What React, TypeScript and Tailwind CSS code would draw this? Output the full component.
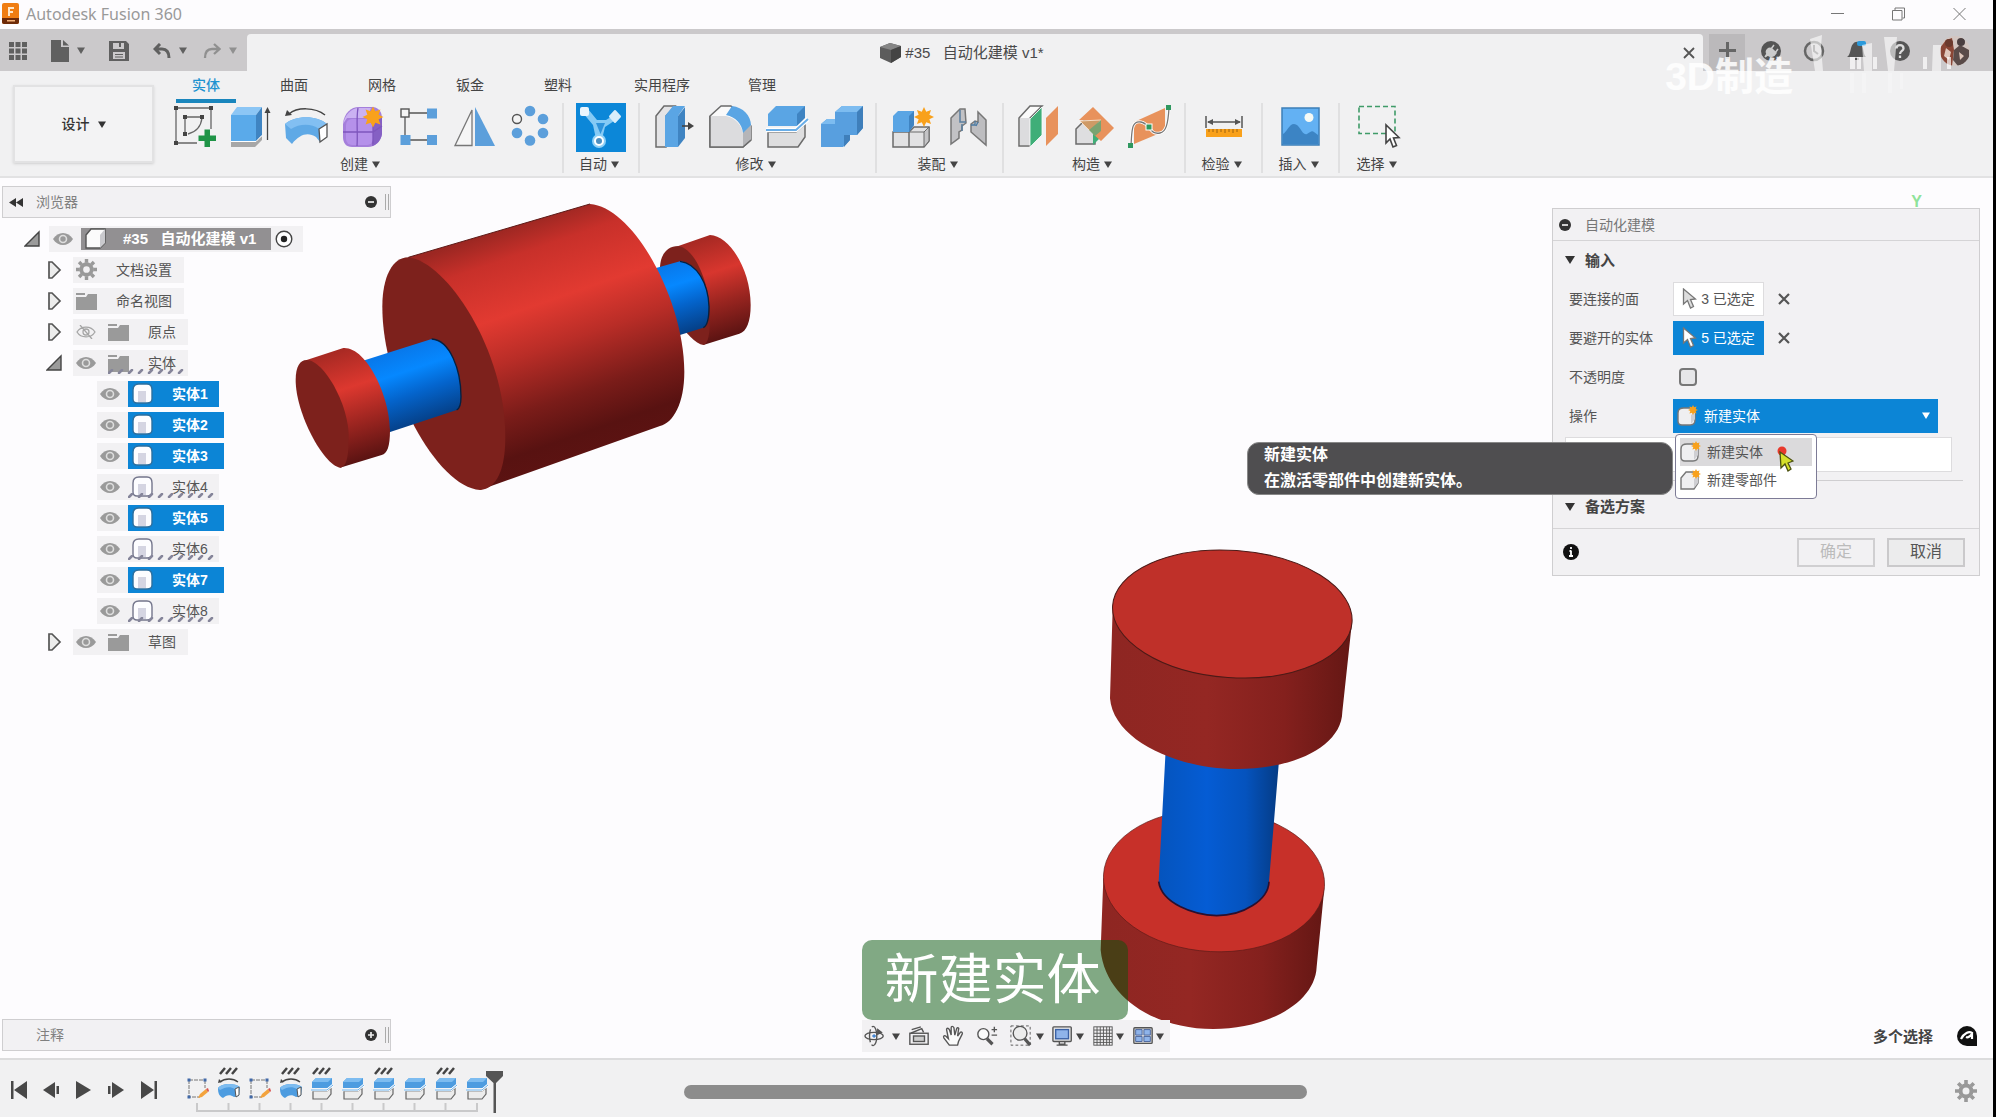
import React from "react";

const BLUE = "#5aa5e4";
const EDGE = "#6b6b6b";

type Kids = { children?: React.ReactNode };

function Pic({ children, size = 46 }: Kids & { size?: number }) {
  return (
    <svg width={size} height={size} viewBox="0 0 46 46" fill="none" aria-hidden="true" className="shrink-0">
      {children}
    </svg>
  );
}

function Caret({ className = "" }: { className?: string }) {
  return (
    <svg width="8" height="7" viewBox="0 0 8 7" aria-hidden="true" className={"shrink-0 " + className}>
      <path d="M0 0.5H8L4 7Z" fill="currentColor" />
    </svg>
  );
}

function Star({ cx, cy, r }: { cx: number; cy: number; r: number }) {
  const pts = Array.from({ length: 16 }, (_, i) => {
    const a = (i * Math.PI) / 8;
    const d = i % 2 ? r * 0.58 : r;
    return `${cx + d * Math.sin(a)},${cy - d * Math.cos(a)}`;
  }).join(" ");
  return <polygon points={pts} fill="#f9a11b" />;
}

/* ---------- ribbon icons ---------- */

const SketchIcon = () => (
  <Pic>
    <path d="M5 4H40M5 4V39H26M40 4V25" stroke="#666" strokeWidth="1.3" />
    <path d="M14 13H31M14 13V29M31 14C30 22 25 28 17 30" stroke="#666" strokeWidth="1.3" />
    <g fill="#444">
      <rect x="3" y="2" width="4" height="4" /><rect x="38" y="2" width="4" height="4" /><rect x="3" y="37" width="4" height="4" />
      <rect x="12" y="11" width="4" height="4" /><rect x="29" y="11" width="4" height="4" /><rect x="12" y="28" width="4" height="4" />
    </g>
    <path d="M33.500 25.500h5.500v6h6v5.500h-6v6h-5.500v-6h-6v-5.500h6z" fill="#1f9447" />
  </Pic>
);

const ExtrudeIcon = () => (
  <Pic>
    <path d="M4 37H28L35 32V36L28 43H4Z" fill="#a7a7a7" />
    <path d="M4 11L10 3H35L29 11Z" fill="#8cc6f5" />
    <path d="M4 11H29V37H4Z" fill="#5aaaea" />
    <path d="M29 11L35 3V31L29 37Z" fill="#3f84c2" />
    <path d="M4 37.500H29L35 31.500" stroke="#fff" />
    <path d="M40.500 36V7" stroke="#444" strokeWidth="1.300" />
    <path d="M37.500 9L40.500 3L43.500 9Z" fill="#444" />
  </Pic>
);

const RevolveIcon = () => (
  <Pic>
    <path d="M6 10C14 3 32 3 42 11" stroke="#444" strokeWidth="1.500" />
    <path d="M2 12L4 6L9 11Z" fill="#444" />
    <path d="M2 20C12 11 34 11 44 20V33L37 38L33 33C25 28 17 30 9 40L3 34Z" fill="#5fa9e6" />
    <path d="M2 20C12 11 34 11 44 20L36 25C28 19 16 20 8 25Z" fill="#82bff2" />
    <path d="M36 25L44 20V33L37 38Z" fill="#fff" stroke="#555" strokeWidth="1.300" />
  </Pic>
);

const FormIcon = () => (
  <Pic>
    <path d="M4 20C5 9 12 3 20 3H34C41 4 43 9 43 15V30C42 37 36 43 29 43H13C7 43 4 39 4 33Z" fill="#a57fdb" />
    <path d="M4 20C6 11 12 4 20 4H32L28 14H8Z" fill="#cbb2f2" />
    <path d="M34 18L43 12V30C42 36 38 41 33 42Z" fill="#8560c4" />
    <rect x="7" y="15" width="27" height="26" rx="6" fill="#b591ea" />
    <path d="M19 4C17 14 19 30 18 42M4 28H34L43 22M34 16V40" stroke="#7e56bd" strokeWidth="1.300" />
    <Star cx={34} cy={13} r={10.500} />
  </Pic>
);

const RectPatternIcon = () => (
  <Pic>
    <path d="M10 9H37M10 9V36H37" stroke="#555" strokeWidth="1.300" />
    <rect x="6" y="5" width="8" height="8" fill="#f4f4f4" stroke="#555" strokeWidth="1.400" />
    <rect x="32" y="4.500" width="10" height="10" fill="#5c9fdb" /><rect x="5.500" y="31" width="10" height="10" fill="#5c9fdb" />
    <rect x="32" y="31" width="10" height="10" fill="#5c9fdb" />
  </Pic>
);

const MirrorIcon = () => (
  <Pic>
    <path d="M4 41.500L21 6V41.500Z" fill="#f6f6f6" stroke="#777" strokeWidth="1.300" />
    <path d="M24 3L44 42H24Z" fill="#5c9fdb" />
  </Pic>
);

const CircPatternIcon = () => (
  <Pic>
    <circle cx="10" cy="15" r="4.500" stroke="#555" strokeWidth="1.400" fill="#f4f4f4" />
    <g fill="#5c9fdb">
      <circle cx="23" cy="7" r="5.300" /><circle cx="36" cy="15" r="5.300" /><circle cx="36" cy="29" r="5.300" />
      <circle cx="23" cy="36.500" r="5.300" /><circle cx="10" cy="29" r="5.300" />
    </g>
  </Pic>
);

const AutoIcon = () => (
  <svg width="50" height="49" viewBox="0 0 50 49" fill="none" aria-hidden="true">
    <rect width="50" height="49" fill="#0c87d8" />
    <path d="M7 10L17 22L20 36H26L29 24L41 16L38 12L30 17H21L12 6Z" fill="#86caf5" />
    <path d="M20 20H29L24.500 31Z" fill="#2f93db" />
    <rect x="4" y="4" width="9" height="9" rx="2" fill="#eaf5fd" />
    <path d="M39 8L44 13.500L39 19L34 13.500Z" fill="#d8edfb" stroke="#d8edfb" strokeWidth="2" strokeLinejoin="round" />
    <circle cx="23" cy="38" r="7" fill="#8ed0f7" /><circle cx="23" cy="38" r="4" stroke="#fff" strokeWidth="2" fill="#4d8fc0" />
  </svg>
);

const PressPullIcon = () => (
  <Pic>
    <path d="M5 12L13 2H24L15 12V43H5Z" fill="#e4e4e6" stroke={EDGE} strokeWidth="1.500" />
    <path d="M14 12L22 2H34L27 12V43H14Z" fill={BLUE} />
    <path d="M27 12L34 3V34L27 43Z" fill="#3f84c2" />
    <path d="M31 22H38" stroke="#444" strokeWidth="1.600" /><path d="M37 18L43 22L37 26Z" fill="#444" />
  </Pic>
);

const FilletIcon = () => (
  <Pic>
    <path d="M3 12L14 2H24L44 22V36L36 43H3Z" fill="#fafafa" stroke={EDGE} strokeWidth="1.500" strokeLinejoin="round" />
    <path d="M3 12H19C29 14 35 22 36 30V43H3Z" fill="#dcdcde" />
    <path d="M36 28L44 20V36L36 43Z" fill="#b5b5b8" />
    <path d="M19 11L25 2C36 3 44 12 44 21L36 29C35 20 29 13 19 11Z" fill={BLUE} />
    <path d="M3 12V43H36L44 36" stroke={EDGE} strokeWidth="1.500" />
  </Pic>
);

const SplitIcon = () => (
  <Pic>
    <path d="M5 28H33L42 20V33L35 43H5Z" fill="#dededf" stroke={EDGE} strokeWidth="1.500" />
    <path d="M5 10L13 2H42V13L34 22H5Z" fill={BLUE} />
    <path d="M34 10L42 2V14L34 22Z" fill="#3f84c2" />
    <path d="M3 26H33L45 15" stroke="#fff" strokeWidth="4.500" /><path d="M3 26H33L45 15" stroke="#69aee8" strokeWidth="2" />
  </Pic>
);

const CombineIcon = () => (
  <Pic>
    <path d="M2 20L8 15H16V8L23 2H44V24L38 31H31V36L24 43H2Z" fill="#589fdf" />
    <path d="M16 8L23 2H44L38 8ZM2 20L8 15H16V20Z" fill="#7dbcf0" />
    <path d="M38 8L44 2V24L38 31ZM25 31H31V36L25 43Z" fill="#3f7fbb" />
  </Pic>
);

const NewComponentIcon = () => (
  <Pic>
    <path d="M4 28H20V43H4ZM20 28L25 23H40V37L35 43H20Z" fill="#e2e2e3" stroke={EDGE} strokeWidth="1.500" />
    <path d="M35 28L40 23V37L35 43ZM20 28H35" stroke={EDGE} fill="#c4c4c6" />
    <path d="M4 12L9 7H25V21L20 28H4Z" fill={BLUE} /><path d="M20 12L25 7V21L20 28Z" fill="#3f84c2" />
    <Star cx={35} cy={13} r={10} />
  </Pic>
);

const JointIcon = () => (
  <Pic>
    <path d="M6 14L15 5H20L21 19L17 22V26L14 28V34L6 40Z" fill="#c2c2c5" stroke="#777" strokeWidth="1.500" />
    <path d="M15 6V18H21M17 20V27" stroke="#5b7f9e" strokeWidth="1.500" />
    <path d="M41 16L33 8V18L30 17L26 20V28L41 41Z" fill="#bdbdc0" stroke="#777" strokeWidth="1.500" />
    <path d="M30 17V21H26M33 18L31 22" stroke="#4b7ba3" strokeWidth="1.300" />
  </Pic>
);

const OffsetPlaneIcon = () => (
  <Pic>
    <path d="M4 14L15 2H27L15 14V42H4Z" fill="#fafafa" stroke={EDGE} strokeWidth="1.500" />
    <path d="M5 14H15V41H5Z" fill="#dcdcde" />
    <path d="M15 15L27 3V31L15 43Z" fill="#3fae78" stroke="#fff" strokeWidth="0.800" />
    <path d="M31 14L43 2V30L31 42Z" fill="#e8925c" />
  </Pic>
);

const AnglePlaneIcon = () => (
  <Pic>
    <path d="M5 25L13 17H30L24 25V40H5Z" fill="#dedee0" stroke={EDGE} strokeWidth="1.500" />
    <path d="M22 24L31 16V32L22 41Z" fill="#3fae78" />
    <path d="M8 16L22 3L43 24L30 37L22 30L28 17Z" fill="#e8925c" />
    <path d="M9 17L30 16L19 27Z" fill="#cf9a66" stroke="#f6dcc4" strokeWidth="1" />
    <path d="M18 26L30 16V27L24 32Z" fill="#7aa371" />
  </Pic>
);

const PathPlaneIcon = () => (
  <Pic>
    <path d="M7 18L38 4V27L7 40Z" fill="#e8925c" />
    <path d="M4 41C5 28 4 16 14 18C24 20 22 31 33 29C39 28 41 20 42 4" stroke="#fff" strokeWidth="3" />
    <path d="M4 41C5 28 4 16 14 18C24 20 22 31 33 29C39 28 41 20 42 4" stroke="#777" strokeWidth="1.300" />
    <g fill="#2f9860"><rect x="1" y="39" width="5" height="5" /><rect x="39" y="1" width="5" height="5" /></g>
    <rect x="19" y="20" width="6" height="6" fill="#2f9860" stroke="#fff" />
  </Pic>
);

const MeasureIcon = () => (
  <Pic>
    <path d="M5 12V24M41 12V24M7 18H39" stroke="#555" strokeWidth="1.500" />
    <path d="M6 18L12 15V21ZM40 18L34 15V21Z" fill="#555" />
    <rect x="5" y="25" width="36" height="8" fill="#f9a11b" />
    <path d="M8 25V28M12 25V28M16 25V29M20 25V28M24 25V29M28 25V28M32 25V29M36 25V28" stroke="#9c6210" />
  </Pic>
);

const InsertIcon = () => (
  <Pic>
    <rect x="4" y="4" width="37" height="37" fill="#63b1f3" stroke="#3d7fb8" strokeWidth="1.500" />
    <circle cx="31" cy="13.500" r="4.500" fill="#f5faf6" />
    <path d="M5 30C9 28 11 20 16 20C22 20 24 32 29 30C32 28 34 26 36 28L40 31V40H5Z" fill="#3c84c4" />
  </Pic>
);

const SelectIcon = () => (
  <Pic>
    <rect x="3" y="2.500" width="36" height="27" stroke="#3f9b68" strokeWidth="1.600" strokeDasharray="5 3" />
    <path d="M30 21V39L34 35L37 43L40.500 41.500L37.500 34L43 33.500Z" fill="#fff" stroke="#444" strokeWidth="1.600" />
  </Pic>
);

type Group = { label: string; width: string; icons: { name: string; el: React.ReactNode }[] };

const groups: Group[] = [
  {
    label: "创建", width: "w-[402px]",
    icons: [
      { name: "创建草图", el: <SketchIcon /> }, { name: "拉伸", el: <ExtrudeIcon /> }, { name: "旋转", el: <RevolveIcon /> },
      { name: "创建形状", el: <FormIcon /> }, { name: "矩形阵列", el: <RectPatternIcon /> }, { name: "镜像", el: <MirrorIcon /> },
      { name: "环形阵列", el: <CircPatternIcon /> },
    ],
  },
  { label: "自动", width: "w-[76px]", icons: [{ name: "自动化建模", el: <AutoIcon /> }] },
  {
    label: "修改", width: "w-[237px]",
    icons: [
      { name: "按拉", el: <PressPullIcon /> }, { name: "圆角", el: <FilletIcon /> }, { name: "分割实体", el: <SplitIcon /> },
      { name: "合并", el: <CombineIcon /> },
    ],
  },
  { label: "装配", width: "w-[127px]", icons: [{ name: "新建零部件", el: <NewComponentIcon /> }, { name: "联接", el: <JointIcon /> }] },
  {
    label: "构造", width: "w-[182px]",
    icons: [{ name: "偏移平面", el: <OffsetPlaneIcon /> }, { name: "角度平面", el: <AnglePlaneIcon /> }, { name: "沿路径平面", el: <PathPlaneIcon /> }],
  },
  { label: "检验", width: "w-[77px]", icons: [{ name: "测量", el: <MeasureIcon /> }] },
  { label: "插入", width: "w-[77px]", icons: [{ name: "插入图像", el: <InsertIcon /> }] },
  { label: "选择", width: "w-[77px]", icons: [{ name: "窗口选择", el: <SelectIcon /> }] },
];

/* ---------- title bar and quick access bar ---------- */

function TitleBar() {
  return (
    <header className="flex h-[29px] shrink-0 items-center bg-[#fdfcfe] pb-0.5 pl-0.5">
      <svg width="18" height="22" viewBox="0 0 18 22" aria-hidden="true">
        <rect x="0" y="0" width="17" height="21" rx="2" fill="#f07d12" /><path d="M0 15H17V19a2 2 0 0 1-2 2H2a2 2 0 0 1-2-2Z" fill="#6d2a07" />
        <path d="M6 4H12V6H8V8H11V10H8V13H6Z" fill="#ffe7c9" /><rect x="5" y="17" width="8" height="1.500" fill="#f3b27a" />
      </svg>
      <h1 className="ml-1.5 flex-1 font-['Noto_Sans'] text-base leading-none text-[#999]">Autodesk Fusion 360</h1>
      <div className="flex items-center gap-12 pr-[27px] text-[#777]">
        <button aria-label="最小化"><svg width="13" height="14" viewBox="0 0 13 14" fill="none" stroke="currentColor"><path d="M0 6.500H13" /></svg></button>
        <button aria-label="还原"><svg width="13" height="14" viewBox="0 0 13 14" fill="none" stroke="currentColor"><path d="M0.500 3.500H10V13H0.500ZM3 3V1H12.500V11H10.500" /></svg></button>
        <button aria-label="关闭"><svg width="13" height="14" viewBox="0 0 13 14" fill="none" stroke="currentColor"><path d="M0.500 1L12.500 13M12.500 1L0.500 13" /></svg></button>
      </div>
    </header>
  );
}

function QuickBar() {
  return (
    <div className="relative flex h-[42px] shrink-0 bg-[#cbc9cb] pt-[5px]">
      <div className="flex w-[247px] shrink-0 items-center pb-2 pl-2 pt-1 text-[#606060]">
        <button aria-label="数据面板">
          <svg width="20" height="20" viewBox="0 0 20 20" fill="currentColor"><path d="M1 1h5v5H1zM7.500 1h5v5h-5zM14 1h5v5h-5zM1 7.500h5v5H1zM7.500 7.500h5v5h-5zM14 7.500h5v5h-5zM1 14h5v5H1zM7.500 14h5v5h-5zM14 14h5v5h-5z" /></svg>
        </button>
        <button aria-label="文件" className="ml-[23px] flex items-center gap-2">
          <svg width="18" height="22" viewBox="0 0 18 22" fill="currentColor"><path d="M0 0H10V7H18V22H0ZM12 0L18 5.500H12Z" /></svg>
          <Caret />
        </button>
        <button aria-label="保存" className="ml-6">
          <svg width="20" height="20" viewBox="0 0 20 20" fill="currentColor"><path fillRule="evenodd" d="M0 0H17L20 3V20H0ZM4 2V8H15V2H12V6H10V2ZM4 11V18H16V11ZM6 13H14V14H6ZM6 15.500H14V16.500H6Z" /></svg>
        </button>
        <button aria-label="撤消" className="ml-6 flex items-center gap-2">
          <svg width="18" height="16" viewBox="0 0 18 16" fill="none" stroke="currentColor" strokeWidth="3"><path d="M7 1L2 6L7 11M2 6H9C14 6 16 10 16 15" /></svg>
          <Caret />
        </button>
        <button aria-label="重做" className="ml-4 flex items-center gap-2 text-[#909090]">
          <svg width="18" height="16" viewBox="0 0 18 16" fill="none" stroke="currentColor" strokeWidth="2.300"><path d="M11 1L16.500 6L11 11M16 6H9C4 6 2 10 2 15" /></svg>
          <Caret />
        </button>
      </div>
      <div className="flex min-w-0 flex-1 items-center rounded-t bg-[#f1f1f2] pr-2">
        <div className="flex flex-1 items-center justify-center gap-1 pr-1.5 text-[15px] leading-none text-[#4a4a4a]">
          <svg width="21" height="20" viewBox="0 0 21 20" aria-hidden="true"><path d="M0 4L10 0L21 3V14L11 20L0 15Z" fill="#5c5c5c" /><path d="M0 4L10 0L21 3L11 7Z" fill="#858585" /><path d="M11 7L21 3V14L11 20Z" fill="#444" /></svg>
          <span className="whitespace-pre">#35   自动化建模 v1*</span>
        </div>
        <button aria-label="关闭文档">
          <svg width="12" height="12" viewBox="0 0 12 12" fill="none" stroke="#555" strokeWidth="1.800"><path d="M1 1L11 11M11 1L1 11" /></svg>
        </button>
      </div>
      <div className="flex w-[290px] shrink-0 items-center pl-1.5 text-[#555]">
        <button aria-label="新建文档" className="flex h-full w-9 items-center justify-center bg-[#bbb9bb] pb-1">
          <svg width="17" height="17" viewBox="0 0 17 17" stroke="#666" strokeWidth="3"><path d="M8.500 0V17M0 8.500H17" /></svg>
        </button>
        <div className="flex h-full flex-1 items-center gap-[21px] pb-1 pl-[15px]">
          <button aria-label="扩展"><svg width="22" height="22" viewBox="0 0 22 22"><circle cx="11" cy="11" r="10" fill="#555" /><path d="M5 17L7 14C5 10 9 7 12 9L16 13C14 17 10 17 8 15ZM11 9L14 5M15 13L18 9" stroke="#ccc" strokeWidth="1.500" fill="#ccc" /></svg></button>
          <button aria-label="作业状态"><svg width="22" height="22" viewBox="0 0 22 22" fill="none"><circle cx="11" cy="11" r="9" stroke="#666" strokeWidth="2.500" /><path d="M11 5V11L15 14" stroke="#666" strokeWidth="2" /></svg></button>
          <button aria-label="通知"><svg width="22" height="22" viewBox="0 0 22 22"><path d="M1 17C5 15 4 7 7 4C9 1 13 1 15 4C18 7 17 15 20 17ZM9 18H13V20H9Z" fill="#555" /><rect x="11" y="1" width="9" height="5" rx="2" fill="#2b9adb" /></svg></button>
          <button aria-label="帮助"><svg width="22" height="22" viewBox="0 0 22 22" fill="none"><circle cx="11" cy="11" r="10" fill="#555" /><path d="M7.500 8.500C7.500 4 14.500 4 14.500 8.500C14.500 11 11 11 11 14M11 15.500V18" stroke="#ddd" strokeWidth="2.300" /></svg></button>
          <button aria-label="账户" className="ml-2">
            <svg width="30" height="30" viewBox="0 0 30 30">
              <clipPath id="avatarClip"><circle cx="15" cy="15" r="15" /></clipPath>
              <g clipPath="url(#avatarClip)">
                <rect width="30" height="30" fill="#d3c6c1" /><path d="M0 12L6 4L12 2L14 14L12 30H0Z" fill="#8a4636" /><circle cx="9" cy="7" r="4" fill="#6b3a2e" />
                <path d="M14 14L20 9L29 14V26L18 30L13 24Z" fill="#5a4b49" /><circle cx="21" cy="6" r="4" fill="#4b3f40" /><path d="M6 12L11 16L9 24L4 20ZM19 16L24 20L20 24Z" fill="#dfc6bb" />
              </g>
            </svg>
          </button>
        </div>
      </div>
      <div className="pointer-events-none absolute right-9 top-1 z-10 flex items-start">
        <span className="mr-[9px] mt-6 text-[39px] font-bold leading-none text-white/85">3D制造</span>
        <svg width="155" height="60" viewBox="0 0 155 60" fill="#fff" fillOpacity="0.600" aria-hidden="true">
          <path d="M8 6L20 2L19 14L21 38H13ZM60 12L70 10V38H62ZM82 4H95L92 38H86ZM131 12H139V38H130Z" />
          <path d="M48 24H53V36H48ZM55 24H59V36H55ZM71 24H75V36H71ZM121 24H125V36H121ZM145 24H149V36H145Z" fillOpacity="0.700" />
          <path d="M48 40H52V60H48ZM60 40H64V60H60ZM86 40H90V60H86ZM98 40H101V56H98Z" fillOpacity="0.250" />
        </svg>
      </div>
    </div>
  );
}

/* ---------- ribbon ---------- */

const tabs = [
  { label: "实体", width: "w-[88px]", on: true }, { label: "曲面", width: "w-[88px]" }, { label: "网格", width: "w-[88px]" },
  { label: "钣金", width: "w-[88px]" }, { label: "塑料", width: "w-[88px]" }, { label: "实用程序", width: "w-[120px]" }, { label: "管理", width: "w-20" },
];

function Ribbon() {
  return (
    <div className="flex h-[107px] shrink-0 border-b-2 border-[#e2e2e3] bg-[#f1f1f2] text-sm leading-none text-[#444]">
      <div className="w-[164px] shrink-0 pl-[13px] pt-3.5">
        <button className="flex h-[78px] w-[141px] items-center justify-center gap-2 border-2 border-[#e2e2e3] bg-[#f3f3f4] font-medium text-[#333] shadow-sm">
          设计 <Caret />
        </button>
      </div>
      <div className="-ml-0.5 flex min-w-0 flex-1 flex-col">
        <div role="tablist" className="flex h-8 shrink-0">
          {tabs.map((t) => (
            <button key={t.label} role="tab" aria-selected={!!t.on} className={"relative flex h-7 items-center justify-center " + t.width + (t.on ? " font-medium text-[#1f93d0]" : "")}>
              {t.label}
              {t.on && <span className="absolute -bottom-1 left-3.5 h-1 w-[60px] bg-[#1a86bd]" />}
            </button>
          ))}
        </div>
        <div className="flex">
          {groups.map((g) => (
            <section key={g.label} className={"flex h-[70px] shrink-0 flex-col border-r-2 border-[#e0e0e1] last:border-0 " + g.width}>
              <div className="flex h-12 items-center justify-center">
                {g.icons.map((i) => (
                  <button key={i.name} aria-label={i.name} className="flex w-14 justify-center">{i.el}</button>
                ))}
              </div>
              <button className="flex flex-1 items-center justify-center gap-1 pr-1 pt-1">{g.label}<Caret /></button>
            </section>
          ))}
        </div>
      </div>
    </div>
  );
}

/* ---------- browser tree ---------- */

function Eye({ off }: { off?: boolean }) {
  return (
    <svg width="20" height="14" viewBox="0 0 20 14" fill="none" aria-hidden="true" className="shrink-0">
      {off ? (
        <path d="M1 7C5 0.500 15 0.500 19 7C15 13.500 5 13.500 1 7ZM4 0L16 14M7 7C7 3 13 3 13 7C13 11 7 11 7 7" stroke="#a5a5a5" strokeWidth="1.300" />
      ) : (
        <>
          <path d="M0 7C5 -1 15 -1 20 7C15 15 5 15 0 7Z" fill="#9a9a9a" /><circle cx="10" cy="7" r="3.500" stroke="#dedede" strokeWidth="1.600" />
        </>
      )}
    </svg>
  );
}

const Folder = () => (
  <svg width="21" height="18" viewBox="0 0 21 18" fill="#9a9a9a" aria-hidden="true" className="shrink-0"><path d="M0 5H10L12 2H21V18H0ZM0 1H9V3H0Z" /></svg>
);

const Gear = ({ size = 21 }: { size?: number }) => (
  <svg width={size} height={size} viewBox="0 0 22 22" fill="none" aria-hidden="true" className="shrink-0">
    <circle cx="11" cy="11" r="5.500" stroke="#999" strokeWidth="4" />
    <path d="M11 0V4M11 18V22M0 11H4M18 11H22M3.200 3.200L6 6M16 16L18.800 18.800M3.200 18.800L6 16M16 6L18.800 3.200" stroke="#999" strokeWidth="3.600" />
  </svg>
);

function BodyIcon({ on }: { on?: boolean }) {
  return (
    <svg width="21" height="21" viewBox="0 0 21 21" aria-hidden="true" className="shrink-0">
      <path d="M1 7C1 2 4 1 7 1H15C19 1 20 4 20 7V16C20 19 18 20 15 20H5C2 20 1 19 1 16Z" fill="#fdfdff" stroke={on ? "#2c6f9f" : "#74768c"} strokeWidth="1.400" />
      <path d="M6 8H14V19H6Z" fill="#d5d5e2" />
    </svg>
  );
}

function Twisty({ open }: { open?: boolean }) {
  return (
    <svg width="16" height="18" viewBox="0 0 16 18" aria-hidden="true">
      {open ? <path d="M1 16L15 2V16Z" fill="#9b9b9b" stroke="#444" strokeWidth="1.400" /> : <path d="M3 1H6L14 9L6 17H3Z" fill="#ececec" stroke="#555" strokeWidth="1.700" />}
    </svg>
  );
}

function Hatch({ n }: { n: number }) {
  return (
    <span className="absolute inset-x-0 bottom-0.5 overflow-hidden">
      <svg width={n * 10} height="5" viewBox={`0 0 ${n * 10} 5`} stroke="#85859a" strokeWidth="2.500" strokeLinecap="round" aria-hidden="true">
        {Array.from({ length: n }, (_, i) => <path key={i} d={`M${i * 10 + 1} 4L${i * 10 + 4} 1`} />)}
      </svg>
    </span>
  );
}

function FolderRow({ label, open, eye, icon, hatch }: { label: string; open?: boolean; eye?: "on" | "off"; icon?: React.ReactNode; hatch?: boolean }) {
  return (
    <li className="flex h-[31px] items-center pl-[46px]">
      <button aria-label={"展开 " + label} className="w-[27px]"><Twisty open={open} /></button>
      <span className="flex h-[26px] items-center bg-[#f2f1f3] pl-[3px]">
        {eye && <button aria-label={"可见性 " + label} className="mr-3"><Eye off={eye === "off"} /></button>}
        <span className="relative flex h-full items-center pr-3">
          {icon ?? <Folder />}
          <span className="ml-[19px]">{label}</span>
          {hatch && <Hatch n={8} />}
        </span>
      </span>
    </li>
  );
}

function BodyRow({ n, on }: { n: number; on: boolean }) {
  return (
    <li className="flex h-[31px] items-center pl-[97px]">
      <button aria-label={"可见性 实体" + n} className="flex h-[26px] w-[31px] items-center bg-[#f2f1f3] pl-[3px]"><Eye /></button>
      <button className={"relative flex h-[26px] items-center pl-1 " + (on ? "bg-[#0c85d6] font-bold text-white " : "bg-[#f2f1f3] ") + (on && n > 1 ? "w-24" : "w-[91px]")}>
        <BodyIcon on={on} />
        <span className="ml-[19px]">实体{n}</span>
        {!on && <Hatch n={9} />}
      </button>
    </li>
  );
}

function PanelBar({ title, children, plus }: Kids & { title: string; plus?: boolean }) {
  return (
    <div className="flex h-8 items-center border border-[#cfced0] bg-[#f2f1f3] pl-1.5 pr-px text-sm leading-none text-[#808080]">
      <span className="w-[27px]">{children}</span>
      <span className="flex-1">{title}</span>
      <button aria-label={(plus ? "展开 " : "折叠 ") + title} className="mr-2"><RoundSign plus={plus} /></button>
      <span className="h-4 w-1 border-x border-[#aaa]" />
    </div>
  );
}

function RoundSign({ plus }: { plus?: boolean }) {
  return (
    <svg width="12" height="12" viewBox="0 0 12 12" aria-hidden="true"><circle cx="6" cy="6" r="6" fill="#333" /><path d={plus ? "M3 6H9M6 3V9" : "M3 6H9"} stroke="#eee" strokeWidth="1.700" /></svg>
  );
}

function Browser() {
  return (
    <nav aria-label="浏览器" className="text-sm leading-none text-[#555]">
      <PanelBar title="浏览器">
        <svg width="14" height="9" viewBox="0 0 14 9" aria-hidden="true"><path d="M7 0V9L0 4.500ZM14 0V9L7 4.500Z" fill="#333" /></svg>
      </PanelBar>
      <ul className="-ml-0.5 mt-[5px]">
        <li className="flex h-[31px] items-center pl-6">
          <button aria-label="折叠 文档" className="w-[25px]"><Twisty open /></button>
          <span className="flex h-[26px] items-center bg-[#f2f1f3] pl-1 pr-2.5">
            <button aria-label="可见性 文档" className="mr-2"><Eye /></button>
            <span className="mr-1 flex h-[22px] w-[190px] items-center bg-[#929092] pl-1 text-[15px] font-bold text-white">
              <svg width="21" height="21" viewBox="0 0 21 21" aria-hidden="true"><path d="M1 7L6 1H20V15L15 20H1Z" fill="#fbfbfb" stroke="#555" strokeWidth="1.400" /><path d="M15 7L20 1V15L15 20Z" fill="#c9c9cd" /></svg>
              <span className="ml-[17px] whitespace-pre">#35   自动化建模 v1</span>
            </span>
            <svg width="18" height="18" viewBox="0 0 18 18" fill="none" aria-hidden="true"><circle cx="9" cy="9" r="7.800" stroke="#444" strokeWidth="1.400" fill="#fff" /><circle cx="9" cy="9" r="3.200" fill="#222" /></svg>
          </span>
        </li>
        <FolderRow label="文档设置" icon={<Gear />} />
        <FolderRow label="命名视图" />
        <FolderRow label="原点" eye="off" />
        <FolderRow label="实体" eye="on" open hatch />
        {[1, 2, 3, 4, 5, 6, 7, 8].map((n) => <BodyRow key={n} n={n} on={![4, 6, 8].includes(n)} />)}
        <FolderRow label="草图" eye="on" />
      </ul>
    </nav>
  );
}

/* ---------- model ---------- */

function Model() {
  return (
    <svg viewBox="0 178 1993 880" className="absolute inset-0 h-full w-full" fill="none" role="img" aria-label="三维模型">
      <defs>
        <linearGradient id="redMain" gradientUnits="userSpaceOnUse" x1="660" y1="120" x2="900" y2="810">
          <stop offset="0" stopColor="#9c2722" /><stop offset="0.120" stopColor="#c8302a" /><stop offset="0.340" stopColor="#e23a31" /><stop offset="0.520" stopColor="#b92d27" /><stop offset="0.740" stopColor="#7a1c19" /><stop offset="0.900" stopColor="#581211" /><stop offset="1" stopColor="#5c1312" />
        </linearGradient>
        <linearGradient id="redLeft" gradientUnits="userSpaceOnUse" x1="150" y1="485" x2="255" y2="810">
          <stop offset="0" stopColor="#a62923" /><stop offset="0.350" stopColor="#dd382f" /><stop offset="0.650" stopColor="#a02621" /><stop offset="1" stopColor="#5a1312" />
        </linearGradient>
        <linearGradient id="redRight" gradientUnits="userSpaceOnUse" x1="1245" y1="150" x2="1340" y2="445">
          <stop offset="0" stopColor="#a62923" /><stop offset="0.350" stopColor="#d8362e" /><stop offset="0.650" stopColor="#9a2520" /><stop offset="1" stopColor="#5a1312" />
        </linearGradient>
        <linearGradient id="blueLeft" gradientUnits="userSpaceOnUse" x1="350" y1="480" x2="425" y2="700">
          <stop offset="0" stopColor="#0878ea" /><stop offset="0.300" stopColor="#0688ff" /><stop offset="0.600" stopColor="#0464cc" /><stop offset="1" stopColor="#053f86" />
        </linearGradient>
        <linearGradient id="blueRight" gradientUnits="userSpaceOnUse" x1="1170" y1="222" x2="1235" y2="425">
          <stop offset="0" stopColor="#0878ea" /><stop offset="0.300" stopColor="#0688ff" /><stop offset="0.600" stopColor="#0464cc" /><stop offset="1" stopColor="#053f86" />
        </linearGradient>
        <linearGradient id="redSide"><stop offset="0" stopColor="#8e2622" /><stop offset="0.400" stopColor="#942723" /><stop offset="0.720" stopColor="#84201d" /><stop offset="1" stopColor="#641714" /></linearGradient>
        <linearGradient id="blueRod"><stop offset="0" stopColor="#0554bd" /><stop offset="0.400" stopColor="#055cd4" /><stop offset="0.720" stopColor="#0553be" /><stop offset="1" stopColor="#053b84" /></linearGradient>
      </defs>
      <g transform="translate(280 190) scale(0.33333)" strokeLinejoin="round">
        <path d="M1195 168L1290 135C1350 138 1412 240 1412 345C1412 395 1400 425 1378 431L1270 465Z" fill="url(#redRight)" />
        <path d="M1195 168C1245 175 1290 280 1290 380C1290 430 1285 462 1270 465C1225 460 1142 330 1140 230C1142 195 1160 168 1195 168Z" fill="#7d211c" />
        <path d="M1120 236L1200 214C1250 220 1285 280 1287 350C1287 385 1280 408 1270 413L1190 438Z" fill="url(#blueRight)" />
        <path d="M1200 214C1250 220 1285 280 1287 350C1287 385 1280 408 1270 413" stroke="#06203f" strokeWidth="4" />
        <path d="M385 202L930 42C1060 50 1213 330 1213 545C1213 640 1180 698 1140 708L600 900Z" fill="url(#redMain)" />
        <path d="M385 202C500 215 676 480 676 740C676 840 650 895 600 900C470 890 307 590 307 350C307 262 337 202 385 202Z" fill="#7d211c" />
        <path d="M385 202L930 42" stroke="#5c1a17" strokeWidth="3" />
        <path d="M230 518L455 447C510 450 543 540 543 620C543 645 540 655 530 660L310 733Z" fill="url(#blueLeft)" />
        <path d="M455 447C510 450 543 540 543 620C543 645 540 655 530 660" stroke="#06203f" strokeWidth="4" />
        <path d="M80 510L190 474C260 470 330 620 330 720C330 770 322 790 305 795L180 833Z" fill="url(#redLeft)" />
        <path d="M80 510C130 510 206 640 206 740C206 800 200 830 180 833C130 825 47 670 47 570C47 530 60 510 80 510Z" fill="#7d211c" />
      </g>
      <g transform="translate(1080 530) scale(0.33333)">
        <path d="M70 1045L62 1260C75 1400 220 1497 400 1497C560 1497 705 1420 710 1310L733 1075Z" fill="url(#redSide)" />
        <ellipse cx="402" cy="1052" rx="332" ry="213" transform="rotate(3 402 1052)" fill="#c73029" stroke="#5c1a17" strokeWidth="2" />
        <path d="M257 660L236 1055C245 1120 340 1155 410 1157C490 1157 565 1110 567 1055L598 680Z" fill="url(#blueRod)" />
        <path d="M236 1055C245 1120 340 1155 410 1157C490 1157 565 1110 567 1055" stroke="#2a1030" strokeWidth="5" />
        <path d="M98 235L90 505C100 630 290 717 470 717C640 717 785 650 787 545L816 275Z" fill="url(#redSide)" />
        <ellipse cx="457" cy="252" rx="360" ry="191" transform="rotate(4 457 252)" fill="#bf3029" stroke="#4c1a17" strokeWidth="3" />
      </g>
    </svg>
  );
}

/* ---------- command dialog ---------- */

function Arrow({ fill = "#ddd" }: { fill?: string }) {
  return <svg width="15" height="21" viewBox="0 0 15 21" aria-hidden="true"><path d="M1.500 1V16L5.500 12.500L8.500 20L11.500 18.500L8.500 11.500L13.500 11Z" fill={fill} stroke="#777" strokeWidth="1.300" /></svg>;
}

function NewBodyIcon({ part }: { part?: boolean }) {
  return (
    <svg width="21" height="21" viewBox="0 0 21 21" aria-hidden="true" className="shrink-0">
      <path d={part ? "M1 9L6 3H18V14L14 20H1Z" : "M1 8C1 4 4 3 7 3H18V15C18 18 16 20 13 20H5C2 20 1 18 1 16Z"} fill="#efeff1" stroke="#777" strokeWidth="1.400" />
      <path d="M14 10L18 7V14L14 19Z" fill="#cfcfd3" />
      <Star cx={16} cy={5} r={5} />
    </svg>
  );
}

function Clear({ label }: { label: string }) {
  return <button aria-label={label} className="ml-3.5"><svg width="12" height="12" viewBox="0 0 12 12" stroke="#555" strokeWidth="2.200"><path d="M1 1L11 11M11 1L1 11" /></svg></button>;
}

function SectionTitle({ children }: Kids) {
  return (
    <button className="flex items-center gap-2.5 text-[15px] font-bold text-[#444]">
      <svg width="10" height="8" viewBox="0 0 10 8" aria-hidden="true"><path d="M0 0H10L5 8Z" fill="#333" /></svg>
      {children}
    </button>
  );
}

function Dialog() {
  return (
    <form onSubmit={(e) => e.preventDefault()} aria-label="自动化建模" className="relative mr-[13px] mt-[30px] w-[428px] self-start border border-[#cfced0] bg-[#f2f1f3] text-sm leading-none text-[#555]">
      <div className="flex h-8 items-center gap-3.5 border-b border-[#d5d4d6] pl-1.5 text-[#777]"><RoundSign /> 自动化建模</div>
      <div className="flex h-[38px] items-center pl-3"><SectionTitle>输入</SectionTitle></div>
      <div className="flex h-[39px] items-center pl-4">
        <span className="w-[104px]">要连接的面</span>
        <button className="flex h-[34px] w-[91px] items-center justify-center gap-1 border border-[#dddcde] bg-white"><Arrow /> 3 已选定</button>
        <Clear label="清除要连接的面" />
      </div>
      <div className="flex h-[39px] items-center pl-4">
        <span className="w-[104px]">要避开的实体</span>
        <button className="flex h-[34px] w-[91px] items-center justify-center gap-1 bg-[#0c85d6] text-white"><Arrow fill="#fff" /> 5 已选定</button>
        <Clear label="清除要避开的实体" />
      </div>
      <div className="flex h-[39px] items-center pl-4">
        <label htmlFor="opacity" className="w-[104px]">不透明度</label>
        <input id="opacity" type="checkbox" className="ml-1.5 h-[18px] w-[18px] appearance-none rounded border-2 border-[#777] bg-[#e6e6e8]" />
      </div>
      <div className="flex h-[39px] items-center pl-4">
        <label htmlFor="operation" className="w-[104px]">操作</label>
        <span className="relative flex h-[34px] w-[265px] items-center bg-[#0c85d6] text-white">
          <span className="pointer-events-none absolute left-1"><NewBodyIcon /></span>
          <select id="operation" className="h-full w-full appearance-none bg-transparent pl-[31px] outline-none">
            <option>新建实体</option>
            <option>新建零部件</option>
          </select>
          <span className="pointer-events-none absolute right-2"><Caret /></span>
          <ul role="listbox" aria-label="操作选项" className="absolute left-0.5 top-[35px] z-20 flex h-[65px] w-[142px] flex-col rounded-sm border border-[#7d7b96] bg-white py-[3px] pl-1 pr-1 text-[#555]">
            <li role="option" aria-selected="true" className="relative flex h-7 items-center gap-1.5 bg-[#dbdadc]">
              <NewBodyIcon /> 新建实体
              <svg width="18" height="26" viewBox="0 0 18 26" className="absolute left-24 top-2" aria-hidden="true">
                <circle cx="6" cy="5" r="4.500" fill="#e8392c" /><path d="M4 6L5 22L9 18L12 25L15 23L12 17L17 15Z" fill="#d6e02a" stroke="#4c5210" strokeWidth="1.300" />
              </svg>
            </li>
            <li role="option" aria-selected="false" className="flex h-7 items-center gap-1.5"><NewBodyIcon part /> 新建零部件</li>
          </ul>
          <span role="tooltip" className="absolute right-[265px] top-[43px] z-20 flex h-[53px] w-[426px] flex-col justify-center rounded-xl border border-[#888] bg-[#4f4e50] pl-4 text-base font-bold leading-[26px] text-white">
            <span>新建实体</span>
            <span>在激活零部件中创建新实体。</span>
          </span>
        </span>
      </div>
      <div className="pl-3 pr-[27px]">
        <textarea aria-label="状态" readOnly className="mt-0.5 block h-[35px] w-full resize-none border border-[#dddcde] bg-white" />
      </div>
      <div className="mx-4 mt-2 h-px bg-[#cfced0]" />
      <div className="flex h-[47px] items-center pl-3 pt-1"><SectionTitle>备选方案</SectionTitle></div>
      <div className="flex h-[47px] items-center border-t border-[#d5d4d6] pl-2.5 pr-3.5">
        <svg width="16" height="16" viewBox="0 0 16 16" aria-hidden="true"><circle cx="8" cy="8" r="8" fill="#111" /><path d="M8 3V5M8 6.500V12M6 12H10M6.500 7H8" stroke="#fff" strokeWidth="1.800" /></svg>
        <span className="flex-1" />
        <button type="submit" disabled className="h-[29px] w-[78px] border-2 border-[#d0cfd1] text-base leading-none text-[#bbb]">确定</button>
        <button type="button" className="ml-3 h-[29px] w-[78px] border-2 border-[#cac9cb] bg-[#ececed] text-base leading-none text-[#555]">取消</button>
      </div>
    </form>
  );
}

/* ---------- view navigation ---------- */

function NavBar() {
  const s = { width: 22, height: 22, viewBox: "0 0 24 24", fill: "none", stroke: "#555", strokeWidth: 1.5 } as const;
  return (
    <div role="toolbar" aria-label="导航" className="flex h-8 w-max items-center bg-[#f2f1f3] pl-0.5 pr-1.5 text-[#444]">
      <button aria-label="动态观察" className="flex items-center gap-1.5">
        <svg {...s}><ellipse cx="11" cy="12" rx="10" ry="4" /><ellipse cx="10" cy="12" rx="4" ry="10.500" strokeDasharray="14 3" /><path d="M9 12H13M11 10V14" stroke="#3a7fd0" /><path d="M15 5L19 8L15 10Z" fill="#555" /></svg><Caret />
      </button>
      <button aria-label="观察" className="ml-2"><svg {...s}><rect x="2" y="9" width="20" height="12" /><rect x="6" y="12" width="12" height="6" fill="#ccc" /><path d="M3 9L15 4L17 8M4 5L14 2" /></svg></button>
      <button aria-label="平移" className="ml-3"><svg {...s}><path d="M8 22L2 14C1 12 3 11 4 12L7 15L5 5C5 3 7 3 8 5L10 11L10 3C10 1 12 1 13 3L14 11L16 4C17 2 19 3 18 5L17 12L20 8C21 7 23 8 22 10L18 18L17 22Z" fill="#fafafa" /></svg></button>
      <button aria-label="缩放" className="ml-3"><svg {...s}><circle cx="8" cy="10" r="6" fill="#fafafa" /><path d="M12 15L18 21" strokeWidth="3.500" /><path d="M17 5H23M20 2V8M17 11H23" /></svg></button>
      <button aria-label="窗口缩放" className="ml-3 flex items-center gap-1"><svg {...s}><rect x="1" y="1" width="21" height="21" strokeDasharray="3 2.500" strokeWidth="1" /><circle cx="11" cy="9" r="7.500" fill="#ececec" /><path d="M16 15L22 22" strokeWidth="3.500" /></svg><Caret /></button>
      <button aria-label="显示设置" className="ml-2 flex items-center gap-0.5"><svg {...s}><rect x="1" y="2" width="20" height="16" rx="1" fill="#e6e6e6" /><rect x="4" y="5" width="14" height="10" fill="#8fb4ea" stroke="#3b62a5" /><path d="M8 18V21H14V18M5 22H17" /></svg><Caret /></button>
      <button aria-label="栅格" className="ml-2 flex items-center gap-0.5"><svg {...s} strokeWidth={1}><rect x="2" y="2" width="20" height="20" /><path d="M5.500 2V22M9 2V22M12.500 2V22M16 2V22M19 2V22M2 5.500H22M2 9H22M2 12.500H22M2 16H22M2 19H22" /></svg><Caret /></button>
      <button aria-label="视口" className="ml-2 flex items-center gap-0.5"><svg {...s}><rect x="2" y="3" width="20" height="17" rx="1" fill="#ddd" /><path d="M4 5H11V11H4ZM13 5H20V11H13ZM4 12.500H11V18H4ZM13 12.500H20V18H13Z" fill="#8fb4ea" stroke="#47639a" strokeWidth="1" /></svg><Caret /></button>
    </div>
  );
}

/* ---------- timeline ---------- */

function SketchStep() {
  return (
    <svg width="24" height="22" viewBox="0 0 24 22" fill="none" aria-hidden="true">
      <path d="M3 2H19M3 2V19H14M19 2V10" stroke="#777" strokeDasharray="4 1" /><path d="M1.500 0.500h3v3h-3zM17.500 0.500h3v3h-3zM1.500 17.500h3v3h-3z" fill="#4169a8" />
      <path d="M12 20L14 16L20 11L22 14L16 19Z" fill="#f3a33d" /><path d="M20 11L22 10L23 13L22 14Z" fill="#d9534f" />
    </svg>
  );
}

const steps: { kind: "sketch" | "revolve" | "split"; mark?: boolean }[] = [
  { kind: "sketch" }, { kind: "revolve", mark: true }, { kind: "sketch" }, { kind: "revolve", mark: true }, { kind: "split", mark: true },
  { kind: "split" }, { kind: "split", mark: true }, { kind: "split" }, { kind: "split", mark: true }, { kind: "split" },
];

const stepName = { sketch: "草图", revolve: "旋转", split: "分割" };

function MiniRevolve() {
  return (
    <svg width="24" height="22" viewBox="0 0 24 22" fill="none" aria-hidden="true">
      <path d="M3 4C8 0 16 0 21 4" stroke="#444" strokeWidth="1.300" /><path d="M1 5L2 1L5 4Z" fill="#444" />
      <path d="M1 10C5 5 18 5 23 9L22 18L17 19C13 16 9 17 6 20C2 18 1 15 1 10Z" fill="#4d9ce0" /><path d="M1 10C5 5 18 5 23 9L18 11C13 8 8 9 3 12Z" fill="#7dbcf0" />
      <path d="M18 11L22 9V17L19 19Z" fill="#fff" stroke="#555" />
    </svg>
  );
}

function MiniSplit() {
  return (
    <svg width="24" height="22" viewBox="0 0 24 22" fill="none" aria-hidden="true">
      <path d="M3 13H17L21 10V16L17 21H3Z" fill="#ececec" stroke="#666" strokeWidth="1.200" /><path d="M2 4L6 0H22V7L18 10H2Z" fill="#4d9ce0" /><path d="M2 4L6 0H22L18 4Z" fill="#7dbcf0" />
      <path d="M1 12H17L23 7" stroke="#fff" strokeWidth="2.500" /><path d="M1 12H17L23 7" stroke="#69aee8" />
    </svg>
  );
}

function Timeline() {
  return (
    <footer className="relative flex h-[59px] shrink-0 items-start border-t-2 border-[#dcdcdd] bg-[#f1f1f2] pl-2.5 text-[#484848]">
      <div className="mt-[21px] flex w-[172px] gap-3">
        <button aria-label="开始"><svg width="20" height="18" viewBox="0 0 20 18" fill="currentColor"><path d="M1 0H3.500V18H1ZM17 0V18L4 9Z" /></svg></button>
        <button aria-label="上一步"><svg width="20" height="18" viewBox="0 0 20 18" fill="currentColor"><path d="M13 1V17L1 9ZM14.500 5H17V13H14.500Z" /></svg></button>
        <button aria-label="播放"><svg width="20" height="18" viewBox="0 0 20 18" fill="currentColor"><path d="M2 0V18L17 9Z" /></svg></button>
        <button aria-label="下一步"><svg width="20" height="18" viewBox="0 0 20 18" fill="currentColor"><path d="M6 1V17L18 9ZM2 5H4.500V13H2Z" /></svg></button>
        <button aria-label="结束"><svg width="20" height="18" viewBox="0 0 20 18" fill="currentColor"><path d="M3 0V18L16 9ZM16.500 0H19V18H16.500Z" /></svg></button>
      </div>
      <ol className="flex">
        {steps.map((s, i) => (
          <li key={i} className="flex w-[31px] flex-col items-center">
            <svg width="22" height="9" viewBox="0 0 22 9" className="mt-1.5" stroke="#444" strokeWidth="2.500" aria-hidden="true">{s.mark && <path d="M2 8L7 2M8 8L13 2M14 8L19 2" />}</svg>
            <button aria-label={stepName[s.kind] + (i + 1)} className="mt-[3px]">{s.kind === "sketch" ? <SketchStep /> : s.kind === "revolve" ? <MiniRevolve /> : <MiniSplit />}</button>
            <svg width="31" height="9" viewBox="0 0 31 9" className="mt-[3px]" stroke="#c9c9ca" strokeWidth="2" aria-hidden="true">
              <path d={i === 0 ? "M15 0V8H31" : i === steps.length - 1 ? "M16 0V8H0" : "M15.500 0V8M0 8H31"} fill="none" />
            </svg>
          </li>
        ))}
      </ol>
      <svg width="17" height="42" viewBox="0 0 17 42" className="-ml-1.5 mt-[11px]" aria-hidden="true"><path d="M0 0H17V5L10 12V42H7.500V12L0 5Z" fill="#555" /></svg>
      <div className="absolute inset-x-0 top-[25px] flex justify-center pr-0.5"><div className="h-3.5 w-[31.3%] rounded-full bg-[#8c8c8c]" /></div>
      <button aria-label="时间轴设置" className="ml-auto mr-4 mt-5"><Gear size={22} /></button>
    </footer>
  );
}

export default function App() {
  return (
    <div className="flex h-screen min-h-[900px] overflow-hidden bg-black font-['Liberation_Sans','Noto_Sans_CJK_SC',sans-serif]">
      <div className="mr-[3px] flex min-w-0 flex-1 flex-col bg-[#fdfcfe]">
        <TitleBar />
        <QuickBar />
        <Ribbon />
        <main className="relative flex min-h-0 flex-1 justify-between">
          <Model />
          <div className="relative flex w-[391px] shrink-0 flex-col justify-between pb-[7px] pl-0.5 pt-2">
            <Browser />
            <PanelBar title="注释" plus />
          </div>
          <span className="absolute right-[71px] top-4 text-base font-bold leading-none text-[#8fe39a]">Y</span>
          <Dialog />
          <div className="absolute inset-x-0 bottom-1.5 flex justify-center pr-1">
            <div className="w-[266px]">
              <p className="flex h-20 items-center justify-center rounded-[10px] bg-[#05550a]/50 pr-1 text-[54px] font-normal leading-none text-white">新建实体</p>
              <NavBar />
            </div>
          </div>
          <div className="absolute bottom-3 right-4 flex items-center gap-6 text-[15px] font-bold leading-none text-[#444]">
            多个选择
            <svg width="20" height="20" viewBox="0 0 20 20" fill="none" aria-hidden="true"><path d="M10 0A10 10 0 1 0 10 20H20V10A10 10 0 0 0 10 0Z" fill="#111" /><path d="M4 13C7 7 12 5 15 7C14 10 11 12 9 11M15 7V13" stroke="#fff" strokeWidth="2.200" /></svg>
          </div>
        </main>
        <Timeline />
      </div>
    </div>
  );
}
